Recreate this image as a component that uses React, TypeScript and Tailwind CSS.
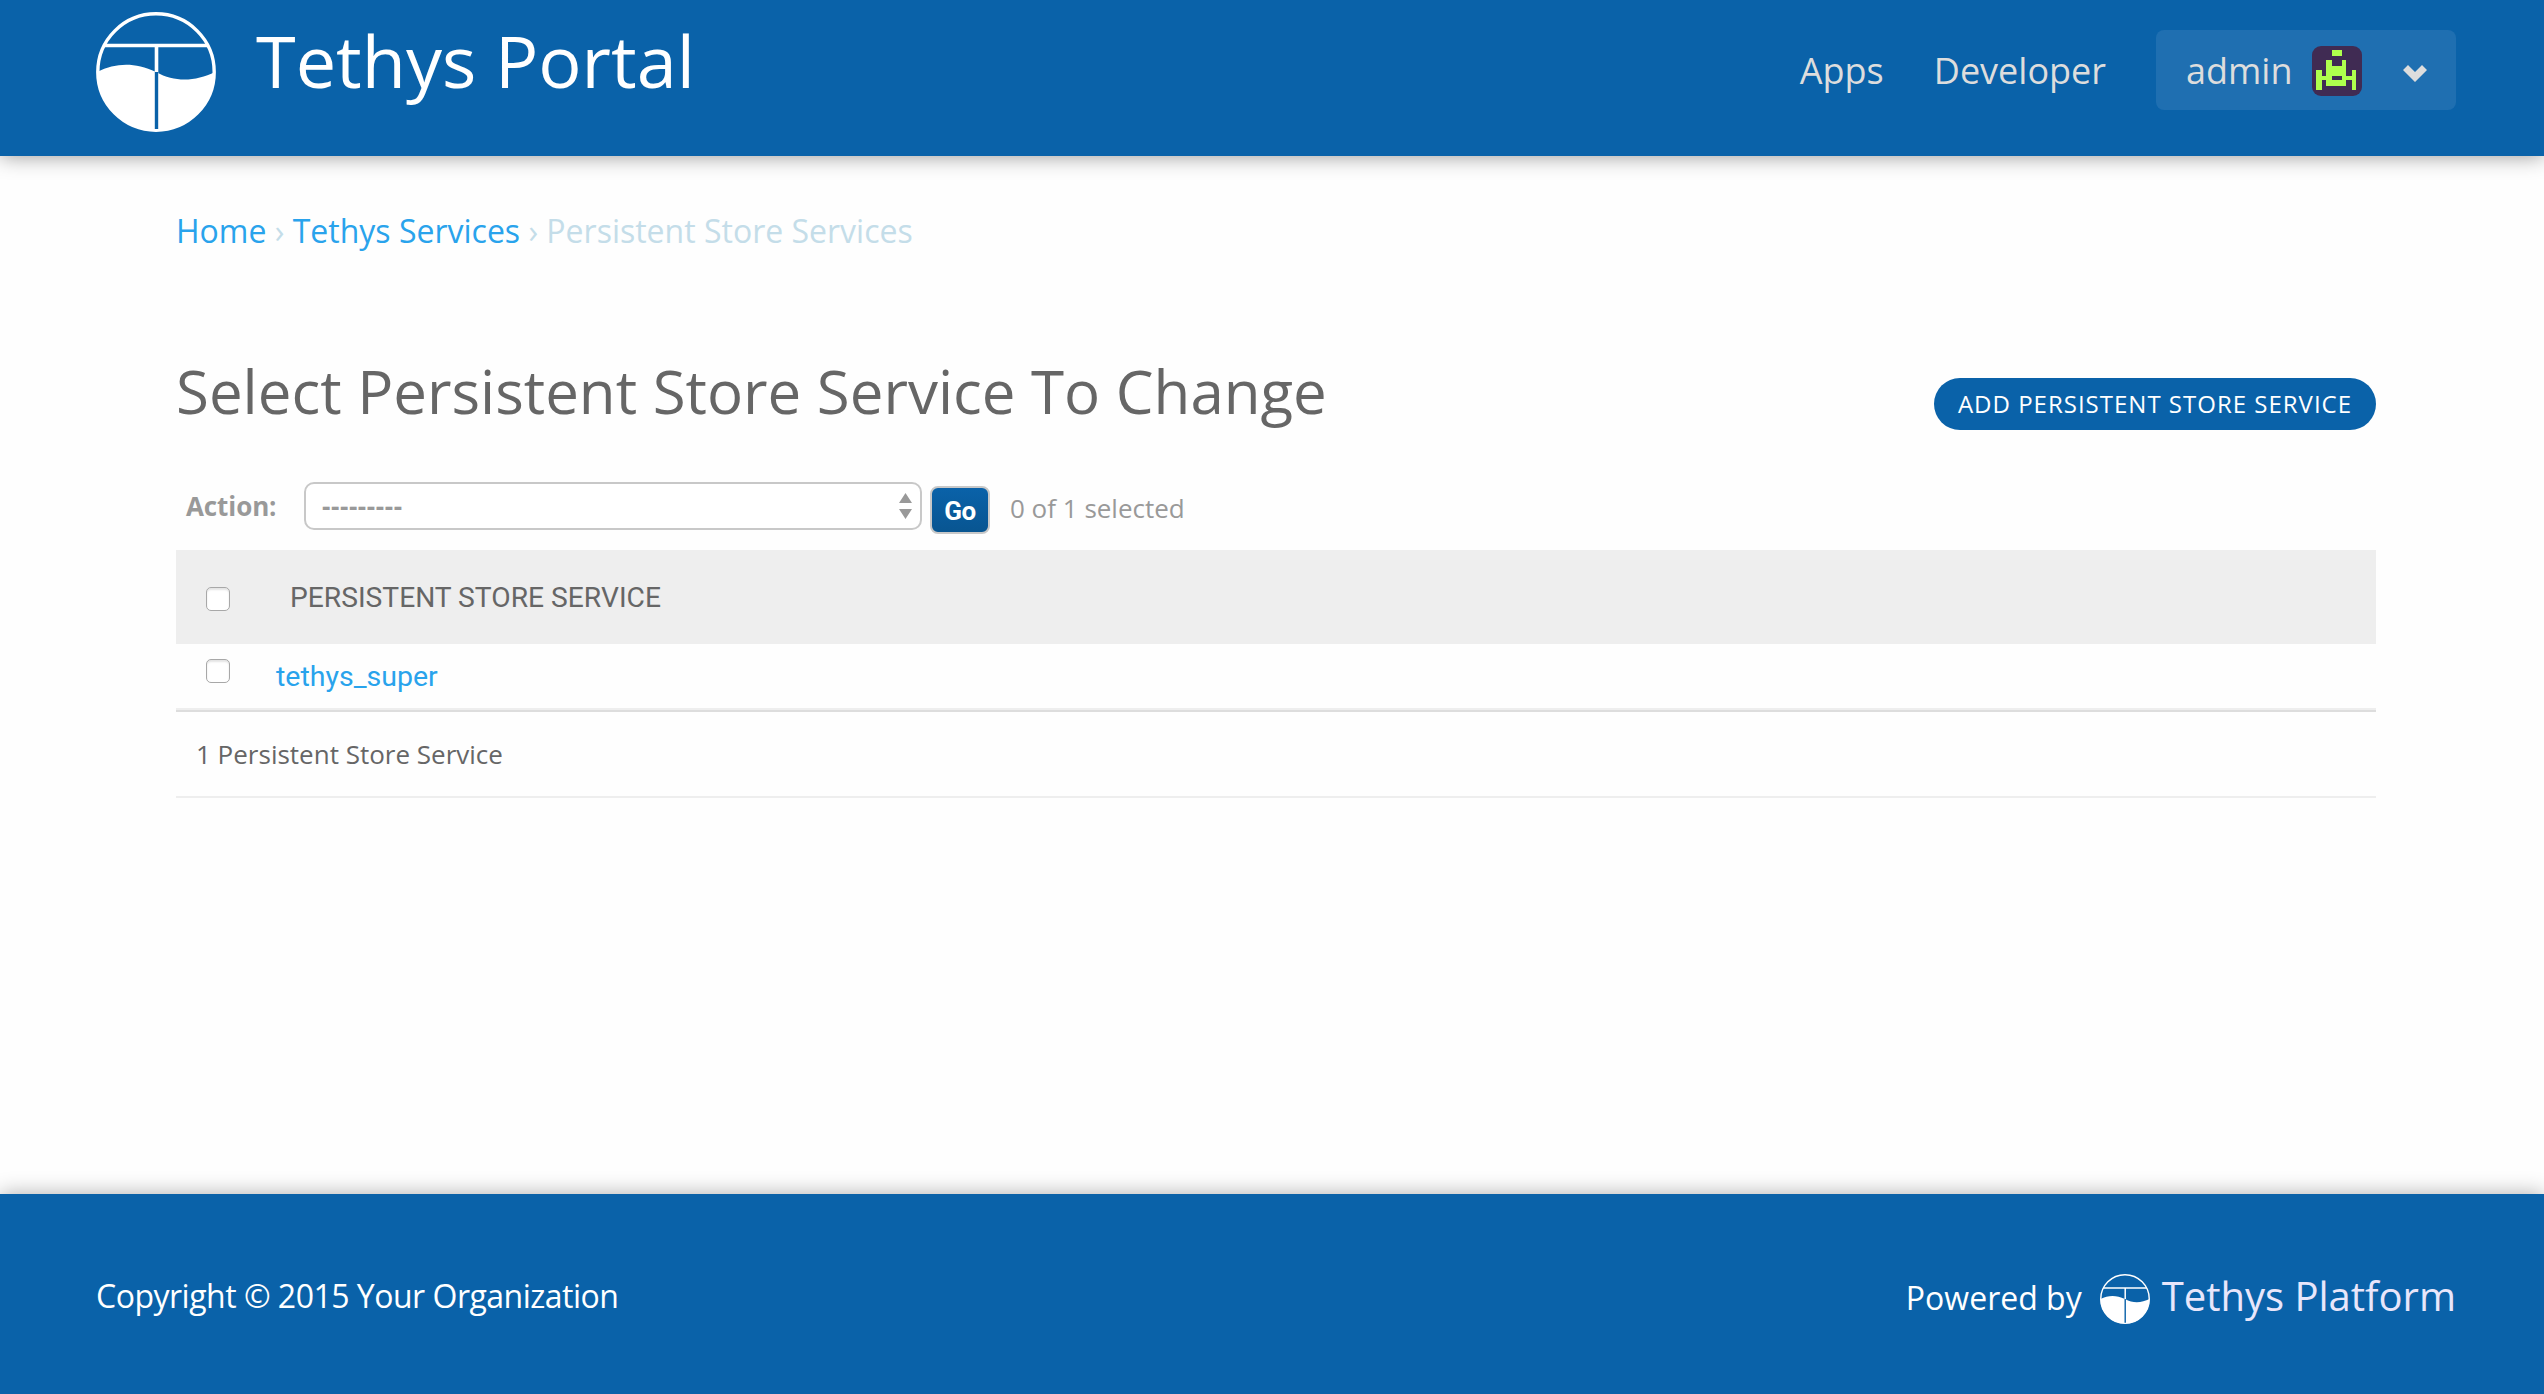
import React from "react";

function Logo({ size, className = "" }: { size: number; className?: string }) {
  return (
    <svg width={size} height={size} viewBox="0 0 120 120" className={className}>
      <circle cx="60" cy="60" r="58.2" fill="none" stroke="#fff" strokeWidth="3.4" />
      <path d="M8 33.5H112M60.5 33V61" stroke="#fff" strokeWidth="3.6" fill="none" />
      <path
        d="M1 60C20 51 38 50 60 60C80 71 100 69 119 60A59 59 0 0 1 1 60Z"
        fill="#fff"
      />
      <path d="M60.5 60V117" stroke="#0a62a9" strokeWidth="3.4" />
    </svg>
  );
}

function Avatar() {
  return (
    <svg width="50" height="50" viewBox="0 0 50 50" className="mt-0.5 ml-[19px]">
      <rect width="50" height="50" rx="9" fill="#402b53" />
      <path
        fill="#aeff4d"
        d="M20 4h10v6h-10zM14 14h6v6h10v-6h4v16h6v-6h4v20h-4v-10h-6v6h-20v-6h-4v10h-6v-20h6v6h4z"
      />
      <rect x="20" y="30" width="10" height="4" fill="#402b53" />
    </svg>
  );
}

function Checkbox({ className = "" }: { className?: string }) {
  return (
    <span
      className={`block h-6 w-6 rounded-[5px] border border-[#a8a8a8] bg-white shadow-[inset_0_2px_2px_#e4e4e4] ${className}`}
    />
  );
}

export default function App() {
  return (
    <div className="flex h-[1394px] w-[2544px] flex-col overflow-hidden bg-[#fefefe] font-['Open_Sans',sans-serif] text-[#666]">
      <header className="z-10 flex h-[156px] shrink-0 items-start justify-between bg-[#0a62a9] pr-[88px] pl-24 text-white shadow-[0_0_20px_rgba(0,0,0,0.42)]">
        <div className="flex">
          <Logo size={120} className="mt-3" />
          <h1 className="mt-[11px] ml-10 text-[72px] leading-[98px]">Tethys Portal</h1>
        </div>
        <nav className="flex items-center pt-[30px] text-[36px] text-[#dddddd]">
          <a className="pt-0.5">Apps</a>
          <a className="ml-[50px] pt-0.5">Developer</a>
          <div className="ml-[50px] flex h-20 w-[300px] items-center rounded-[8px] bg-[#1f6fb1] pl-[30px]">
            <span className="pt-0.5">admin</span>
            <Avatar />
            <svg width="24" height="17" viewBox="0 0 24 17" className="mt-[7px] ml-[41px]">
              <path d="M0 5L5 0L12 7L19 0L24 5L12 17Z" fill="#ddd" />
            </svg>
          </div>
        </nav>
      </header>

      <main className="flex-1 pr-[168px] pl-44">
        <div className="flex h-[150px] items-center text-[32px] whitespace-pre text-[#c4dde9]">
          <a className="text-[#29a3ec]">Home</a>
          <span> › </span>
          <a className="text-[#29a3ec]">Tethys Services</a>
          <span> › </span>
          <span>Persistent Store Services</span>
        </div>
        <div className="flex h-[176px] justify-between pt-[44px]">
          <h2 className="text-[60px] leading-[82px]">Select Persistent Store Service To Change</h2>
          <button className="mt-[28px] flex h-[52px] w-[442px] items-center justify-center rounded-full bg-[#0a62a9] pb-px text-[24px] tracking-[1px] text-white">
            ADD PERSISTENT STORE SERVICE
          </button>
        </div>
        <div className="flex h-[68px] text-[26px] text-[#999]">
          <span className="ml-[10px] w-[118px] leading-[48px] font-bold tracking-[-0.1px]">Action:</span>
          <div className="flex h-12 w-[618px] items-center justify-between rounded-[10px] border-2 border-[#c8c8c8] bg-white pr-2 pl-4">
            <span className="font-bold tracking-[0.6px]">---------</span>
            <svg width="13" height="26" viewBox="0 0 13 26">
              <path d="M0 10L6.5 0L13 10ZM0 16H13L6.5 26Z" fill="#999" />
            </svg>
          </div>
          <button className="mt-1 ml-2 flex h-12 w-[60px] items-center justify-center rounded-[8px] border-2 border-[#c8c8c8] bg-linear-to-b from-[#0a62a9] to-[#085591] pt-0.5 font-['Roboto'] font-bold tracking-[-0.5px] text-white">
            Go
          </button>
          <span className="ml-5 leading-[52px]">0 of 1 selected</span>
        </div>
        <div className="flex h-[94px] items-center bg-[#eee] pl-[30px]">
          <Checkbox className="mt-1" />
          <span className="mt-[3px] ml-[60px] font-['Roboto'] text-[28.2px]">PERSISTENT STORE SERVICE</span>
        </div>
        <div className="flex h-[68px] border-b-2 border-[#ddd] pl-[30px] shadow-[inset_0_-2px_0_#eee]">
          <Checkbox className="mt-[15px]" />
          <a className="ml-[46px] font-['Roboto'] text-[28.5px] leading-[66px] text-[#29a3ec]">tethys_super</a>
        </div>
        <div className="h-[86px] border-b-2 border-[#eee] pl-5 text-[26px] leading-[84px]">1 Persistent Store Service</div>
      </main>

      <footer className="flex h-[200px] shrink-0 items-center justify-between bg-[#0a62a9] pr-[88px] pl-24 text-[32px] text-white shadow-[0_0_20px_rgba(0,0,0,0.32)]">
        <span className="pt-1 tracking-[-0.5px]">Copyright © 2015 Your Organization</span>
        <div className="flex items-center">
          <span className="pt-2">Powered by</span>
          <Logo size={50} className="mt-2.5 ml-[18px]" />
          <span className="ml-3 pt-[3px] text-[40px] text-[#e8e6fb]">Tethys Platform</span>
        </div>
      </footer>
    </div>
  );
}
